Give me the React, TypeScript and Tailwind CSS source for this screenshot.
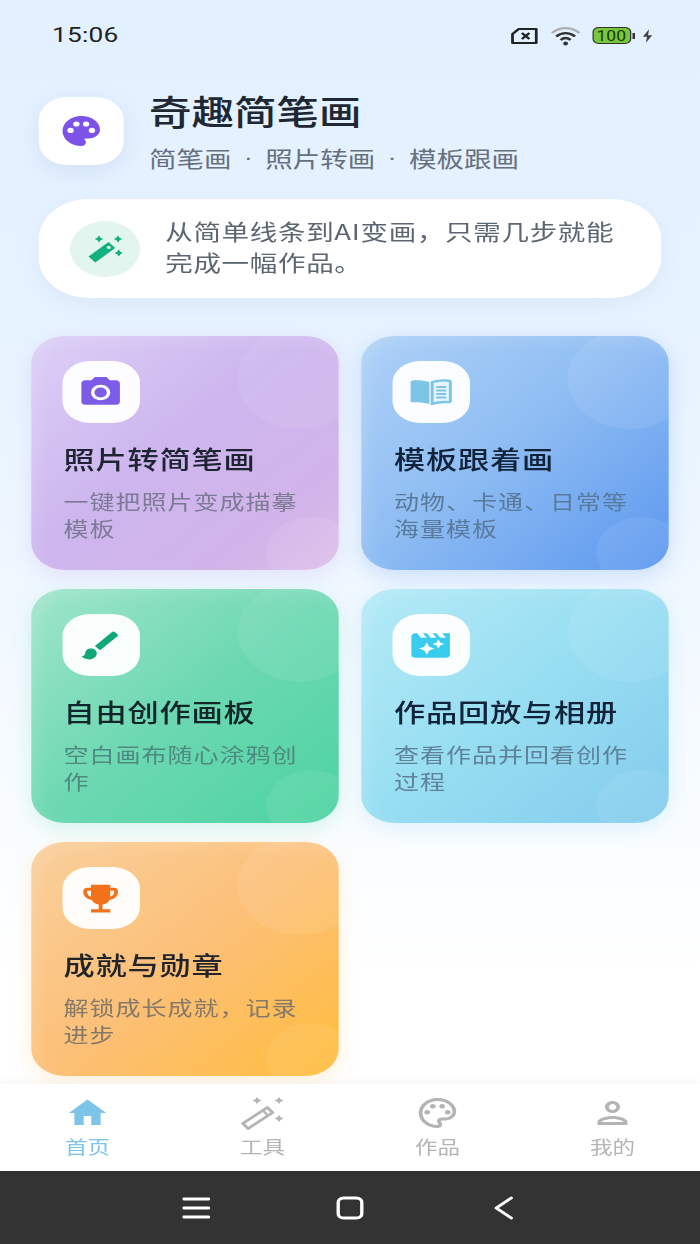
import React from "react";
import { MdPhotoCamera, MdBrush, MdMovieFilter, MdEmojiEvents, MdHome, MdOutlinePalette, MdOutlinePerson } from "react-icons/md";

const spark = (x: number, y: number, r: number) =>
  `M${x} ${y - r}L${x + 0.38 * r} ${y - 0.38 * r}L${x + r} ${y}L${x + 0.38 * r} ${y + 0.38 * r}L${x} ${y + r}L${x - 0.38 * r} ${y + 0.38 * r}L${x - r} ${y}L${x - 0.38 * r} ${y - 0.38 * r}Z`;

function BookIcon() {
  return (
    <svg width="35" height="26" viewBox="0 0 34 26">
      <path d="M16 3C12 1.5 6 1 2.5 1.5Q1 1.7 1 3.2V22Q1 23.5 2.5 23.3C7 23 12 23.5 16 25Z" fill="#7cc5e6" />
      <path d="M18.2 3.2C22 1.7 28 1.2 31.5 1.7Q32.8 1.9 32.8 3.2V22Q32.8 23.3 31.5 23.1C27 22.8 22 23.3 18.2 24.8Z" fill="#e6f5fb" stroke="#7cc5e6" strokeWidth="2.4" />
      <path d="M21.5 8H29.5M21.5 11.5H29.5M21.5 15H29.5M21.5 18.5H29.5" stroke="#7cc5e6" strokeWidth="2" fill="none" />
    </svg>
  );
}

function PaletteIcon() {
  return (
    <svg width="36" height="36" viewBox="0 0 24 24">
      <path fill="#7d52e8" d="M12 2C6.49 2 2 6.49 2 12s4.49 10 10 10c1.38 0 2.5-1.12 2.5-2.5 0-.61-.23-1.2-.64-1.67-.08-.1-.13-.21-.13-.33 0-.28.22-.5.5-.5H16c3.31 0 6-2.69 6-6 0-4.96-4.49-9-10-9z" />
      <circle cx="6.3" cy="11.6" r="1.7" fill="#fff" />
      <circle cx="9.4" cy="7.3" r="1.7" fill="#fff" />
      <circle cx="14.6" cy="7.3" r="1.7" fill="#fff" />
      <circle cx="17.7" cy="11.6" r="1.7" fill="#fff" />
    </svg>
  );
}

function WandFilled() {
  return (
    <svg width="28" height="32" viewBox="0 0 28 32">
      <path d="M3.5 26.5L19.5 12" stroke="#12b07f" strokeWidth="8" fill="none" />
      <circle cx="17" cy="14.4" r="1.6" fill="#e2f5ef" />
      <path d={spark(9.2, 6, 3.4)} fill="#12b07f" />
      <path d={spark(24.4, 6, 3.4)} fill="#12b07f" />
      <path d={spark(25, 20, 3.4)} fill="#12b07f" />
    </svg>
  );
}

function WandOutline() {
  return (
    <svg width="36" height="36" viewBox="0 0 36 36">
      <path d="M2.2 28.4L21.8 12.4L26.2 17.6L6.6 33.6Z" fill="none" stroke="#b4b4b4" strokeWidth="2.6" strokeLinejoin="round" />
      <path d="M18.2 15.4L22.4 20.6" stroke="#b4b4b4" strokeWidth="2.2" />
      <path d={spark(13.6, 5.5, 3.6)} fill="#b4b4b4" />
      <path d={spark(31.2, 5.5, 3.6)} fill="#b4b4b4" />
      <path d={spark(31.2, 23.5, 3.6)} fill="#b4b4b4" />
    </svg>
  );
}

const cards = [
  { t: "照片转简笔画", s: "一键把照片变成描摹模板", icon: <MdPhotoCamera size={37} className="text-[#7c5ce6]" />, bg: "bg-[linear-gradient(135deg,#dccff7_0%,#cdb6ee_45%,#d1b4e9_80%,#dcbfe9_100%)]", sh: "shadow-[0_6px_18px_rgba(170,140,230,0.18),inset_6px_6px_14px_rgba(255,255,255,0.12)]", tc: "text-[#1f2433]", sc: "text-[#7d7a96]" },
  { t: "模板跟着画", s: "动物、卡通、日常等海量模板", icon: <BookIcon />, bg: "bg-[linear-gradient(135deg,#aed1f7_0%,#90bef3_45%,#5b97ef_100%)]", sh: "shadow-[0_6px_18px_rgba(90,150,240,0.25),inset_6px_6px_14px_rgba(255,255,255,0.12)]", tc: "text-[#11233a]", sc: "text-[#5a7a9c]" },
  { t: "自由创作画板", s: "空白画布随心涂鸦创作", icon: <MdBrush size={37} className="text-[#10a878]" />, bg: "bg-[linear-gradient(135deg,#9fe5cb_0%,#6cd8b2_50%,#4cd3a0_100%)]", sh: "shadow-[0_6px_18px_rgba(80,210,160,0.2),inset_6px_6px_14px_rgba(255,255,255,0.12)]", tc: "text-[#10262a]", sc: "text-[#4f8a80]" },
  { t: "作品回放与相册", s: "查看作品并回看创作过程", icon: <MdMovieFilter size={37} className="text-[#38cdee]" />, bg: "bg-[linear-gradient(135deg,#b4eaf6_0%,#97def2_50%,#83cbec_100%)]", sh: "shadow-[0_6px_18px_rgba(120,200,240,0.2),inset_6px_6px_14px_rgba(255,255,255,0.12)]", tc: "text-[#11233a]", sc: "text-[#5f8298]" },
  { t: "成就与勋章", s: "解锁成长成就，记录进步", icon: <MdEmojiEvents size={37} className="text-[#f4711c]" />, bg: "bg-[linear-gradient(135deg,#f9cf9c_0%,#fcc078_50%,#ffbc3c_100%)]", sh: "shadow-[0_6px_18px_rgba(250,190,90,0.22),inset_6px_6px_14px_rgba(255,255,255,0.12)]", tc: "text-[#22242c]", sc: "text-[#85796a]" },
];

const nav = [
  { l: "首页", icon: <MdHome size={36} />, c: "text-[#7cc5e8]" },
  { l: "工具", icon: <WandOutline />, c: "text-[#b4b4b4]" },
  { l: "作品", icon: <MdOutlinePalette size={36} />, c: "text-[#b4b4b4]" },
  { l: "我的", icon: <MdOutlinePerson size={36} />, c: "text-[#b4b4b4]" },
];

const font = { fontFamily: '"Noto Sans CJK SC","Noto Sans",sans-serif' };

function Card({ c }: { c: (typeof cards)[number] }) {
  return (
    <div className={`relative h-[234px] overflow-hidden rounded-[27px] pl-[24.8px] pt-[25px] ${c.bg} ${c.sh}`}>
      <div className="absolute right-[-19px] top-[-7px] h-[100px] w-[100px] rounded-full bg-white/[.08]" />
      <div className="absolute bottom-[-19px] right-[-14px] h-[72px] w-[72px] rounded-full bg-white/[.07]" />
      <div className="relative flex h-[62px] w-[62px] items-center justify-center rounded-[22px] bg-white/95">{c.icon}</div>
      <div className={`relative ml-[1.2px] mt-[19px] h-[32px] text-[25px] font-medium leading-[32px] tracking-[0.6px] whitespace-nowrap ${c.tc}`}>{c.t}</div>
      <div className={`relative ml-[1.2px] mt-[14px] w-[192px] text-[20px] leading-[27px] tracking-[0.8px] ${c.sc}`}>{c.s}</div>
    </div>
  );
}

export default function App() {
  return (
    <div className="h-[1244px] w-[700px] overflow-hidden">
      <div className="flex h-[1244px] w-[560px] origin-top-left scale-x-[1.25] flex-col" style={font}>
        <div className="flex-1 bg-[linear-gradient(180deg,#e2f0ff_0%,#e8f3ff_35%,#f6fbff_70%,#ffffff_90%)]">
          <div className="flex h-[70px] items-center justify-between pl-[41.6px] pr-[37px] pt-[1px]">
            <span className="font-['Roboto'] text-[21px] text-[#222] tracking-[0.2px]">15:06</span>
            <div className="flex items-center">
              <svg width="23" height="18" viewBox="0 0 23 18" fill="none" stroke="#222" strokeWidth="2.2">
                <path d="M7 2h14v14H2V7z" strokeLinejoin="round" />
                <path d="M9.5 6l6 6M15.5 6l-6 6" strokeWidth="2" />
              </svg>
              <svg width="25" height="20" viewBox="0 0 25 20" fill="none" className="ml-[8.5px]">
                <path d="M1.5 7C8 .5 17 .5 23.5 7" stroke="#b0b0b0" strokeWidth="2.4" />
                <path d="M5 10.5C9.5 6 15.5 6 20 10.5" stroke="#333" strokeWidth="2.4" />
                <path d="M8.5 14C11 11.5 14 11.5 16.5 14" stroke="#333" strokeWidth="2.4" />
                <circle cx="12.5" cy="17.5" r="1.9" fill="#333" />
              </svg>
              <div className="ml-[9px] flex items-center">
                <div className="flex h-[17px] w-[31px] items-center justify-center rounded-[5px] border-[1.5px] border-[#333] bg-[#78c63a] font-['Roboto'] text-[14px] leading-none text-[#1b3a10]">100</div>
                <div className="ml-[1.5px] h-[6px] w-[2px] bg-[#333]" />
              </div>
              <svg width="10" height="16" viewBox="0 0 12 18" fill="#444" className="ml-[5px]"><path d="M7.5 1L1.5 10H5.5L4.5 17L10.5 8H6.5Z" /></svg>
            </div>
          </div>

          <div className="ml-[31.2px] mt-[27px] flex h-[68px] items-start gap-[20px]">
            <div className="flex h-[68px] w-[68px] shrink-0 items-center justify-center rounded-[23px] bg-white shadow-[0_6px_18px_rgba(120,150,200,0.16)]">
              <PaletteIcon />
            </div>
            <div className="mt-[-5px]">
              <div className="text-[34px] font-medium leading-[38px] whitespace-nowrap text-[#1e2733]">奇趣简笔画</div>
              <div className="mt-[12px] text-[22px] leading-[30px] whitespace-nowrap text-[#667080]">
                简笔画<span className="inline-block w-[27px] text-center font-['Roboto']">·</span>照片转画<span className="inline-block w-[27px] text-center font-['Roboto']">·</span>模板跟画
              </div>
            </div>
          </div>

          <div className="mx-[31.2px] mt-[34px] flex h-[99px] items-center gap-[20px] rounded-[40px] bg-white pl-[25px] pr-[24px] shadow-[0_6px_18px_rgba(120,150,200,0.1)]">
            <div className="flex h-[56px] w-[56px] shrink-0 items-center justify-center rounded-full bg-[#e2f5ef]">
              <WandFilled />
            </div>
            <div className="pb-[6px] text-[22px] leading-[31px] tracking-[0.55px] text-[#5c6672]">从简单线条到AI变画，只需几步就能完成一幅作品。</div>
          </div>

          <div className="mt-[38px] grid grid-cols-[246px_246px] gap-x-[18.4px] gap-y-[19px] pl-[24.8px]">
            {cards.map((c) => (
              <Card key={c.t} c={c} />
            ))}
          </div>
        </div>

        <div className="relative grid h-[87px] grid-cols-4 bg-white shadow-[0_-2px_8px_rgba(0,0,0,0.04)]">
          {nav.map((n) => (
            <div key={n.l} className={`flex flex-col items-center pt-[11px] ${n.c}`}>
              {n.icon}
              <span className="mt-[2px] text-[18px] leading-[26px]">{n.l}</span>
            </div>
          ))}
        </div>

        <div className="flex h-[73px] items-center bg-[#333333] pl-[146px]">
          <svg width="22" height="22" viewBox="0 0 22 22" stroke="#fff" strokeWidth="2.8" fill="none" strokeLinecap="round"><path d="M1 2h20M1 11h20M1 20h20" /></svg>
          <svg width="22" height="24" viewBox="0 0 22 24" stroke="#fff" strokeWidth="2.8" fill="none" className="ml-[101px]"><rect x="1.5" y="2" width="19" height="20" rx="4.5" /></svg>
          <svg width="16" height="24" viewBox="0 0 16 24" stroke="#fff" strokeWidth="2.8" fill="none" strokeLinecap="round" strokeLinejoin="round" className="ml-[104px]"><path d="M14 2L2 12l12 10" /></svg>
        </div>
      </div>
    </div>
  );
}
